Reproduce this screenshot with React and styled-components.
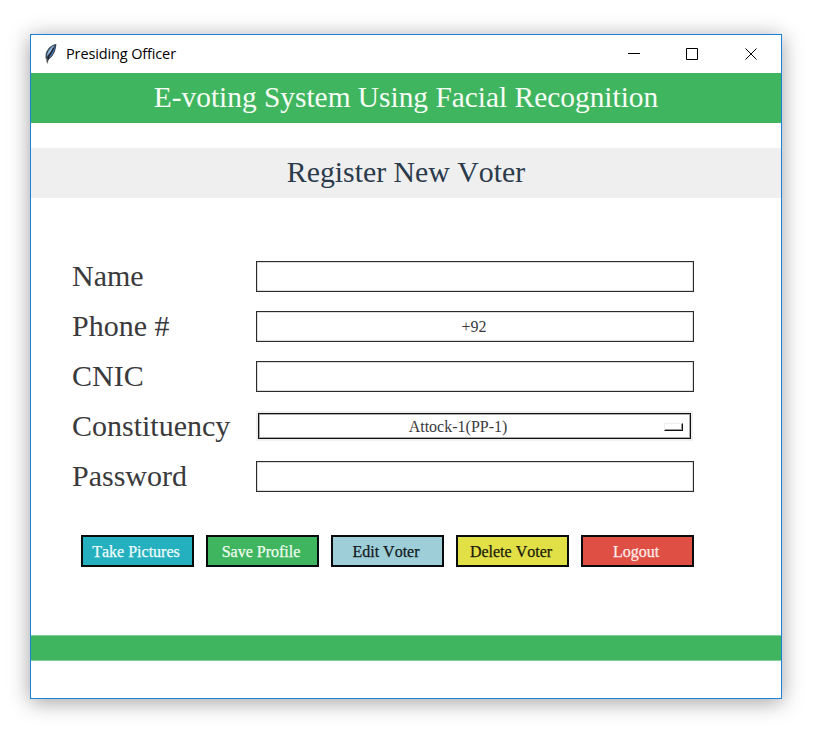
import React from "react";
import styled, { createGlobalStyle } from "styled-components";

const GlobalStyle = createGlobalStyle`
  * { box-sizing: border-box; }
  body { margin: 0; background: #fff; }
`;

const Desktop = styled.div`
  width: 828px;
  height: 750px;
  padding: 34px 46px 51px 30px;
  overflow: hidden;
  background: #fff;
`;

const Window = styled.main`
  display: flex;
  flex-direction: column;
  width: 752px;
  height: 665px;
  border: 1px solid #1a83d7;
  background: #fff;
  box-shadow: 0 3px 20px rgba(0, 0, 0, 0.38);
  font-family: "Liberation Serif", "Times New Roman", serif;
  font-kerning: none;
`;

const TitleBar = styled.header`
  display: flex;
  align-items: center;
  height: 38px;
  flex: none;
  padding: 0 1px 0 12px;
`;

const WindowTitle = styled.span`
  flex: 1;
  margin-left: 7px;
  padding-bottom: 1px;
  font: 14.5px/20px "Open Sans", "Segoe UI", sans-serif;
  letter-spacing: -0.13px;
  color: #000;
`;

const WindowControl = styled.button`
  display: flex;
  align-items: center;
  justify-content: center;
  width: 58.5px;
  height: 38px;
  padding: 0;
  border: 0;
  background: none;
`;

const Banner = styled.h1`
  flex: none;
  height: 50px;
  margin: 0;
  background: #40b55f;
  color: #f6fdf5;
  font-size: 29.4px;
  font-weight: 400;
  line-height: 49px;
  text-align: center;
`;

const Subtitle = styled.h2`
  flex: none;
  height: 50px;
  margin: 25px 0 0;
  background: #efefef;
  color: #2b3b4b;
  font-size: 29.8px;
  font-weight: 400;
  line-height: 47px;
  text-align: center;
`;

const Form = styled.form`
  display: flex;
  flex-direction: column;
  gap: 19px;
  flex: none;
  margin: 63px 88px 0 41px;
`;

const Field = styled.label`
  display: grid;
  grid-template-columns: 184px 438px;
  align-items: center;
  height: 31px;
`;

const FieldName = styled.span`
  padding-bottom: 2px;
  color: #3a3a3c;
  font-size: 30px;
  line-height: 29px;
`;

const TextInput = styled.input`
  width: 438px;
  height: 31px;
  padding: 1px 2px 0 0;
  border: 1px solid #2b2b2b;
  border-radius: 0;
  outline: 0;
  background: #fff;
  box-shadow: inset 0 0 0 0.5px #bbb;
  color: #3a3a3c;
  font: 16px "Liberation Serif", serif;
  text-align: center;
`;

const Picker = styled.button`
  display: grid;
  grid-template-columns: 1fr 19px;
  align-items: center;
  align-self: start;
  width: 433px;
  height: 26px;
  margin: 2px 0 0 2px;
  padding: 0 7px 0 0;
  border: 1px solid #111;
  border-radius: 0;
  background: #fff;
  box-shadow: 0 0 0 2px #f0f0f0, inset 0 0 0 1px #aaa;
  color: #3a3a3c;
  font: 16px/24px "Liberation Serif", serif;
  font-kerning: none;
`;

const PickerValue = styled.span`
  padding: 1px 7px 0 0;
  text-align: center;
`;

const Indicator = styled.span`
  width: 19px;
  height: 8px;
  border: 1px solid #eee;
  border-right: 1px solid #111;
  border-bottom: 1px solid #111;
  box-shadow: inset -1px -1px #999;
`;

const Actions = styled.div`
  display: flex;
  flex: none;
  gap: 12px;
  margin: 43px 0 0 50px;
`;

const ActionButton = styled.button`
  width: 113px;
  height: 32px;
  padding: 2px 3px 0 0;
  border: 2px solid #080b0b;
  border-radius: 0;
  background: ${({ $fill }) => $fill};
  color: ${({ $ink }) => $ink};
  font: 16px/26px "Liberation Serif", serif;
  font-kerning: none;
  -webkit-text-stroke: 0.25px currentColor;
  white-space: nowrap;
`;

const FooterBar = styled.footer`
  flex: none;
  height: 26px;
  margin-top: 68px;
  background: #40b55f;
  border-top: 1px solid #83cf97;
  border-bottom: 1px solid #83cf97;
`;

const Feather = () => (
  <svg width="16" height="22" viewBox="0 0 16 22" aria-hidden="true">
    <path d="M13.3 1C8.7 1.4 4.1 5.7 2.7 10.7l-.2 4.8 2.7 1.2c4.8-2.5 8-9.2 8.1-15.7Z" fill="#364555" />
    <path d="M11.4 2.2C7.8 4 4.4 8.2 3.7 13.3l4.4-4.5 3.3-6.6Z" fill="#91b7df" />
    <path d="m12 3-3 7-4.5 5.2 2.2-.8C9.8 11.9 11.4 8 12 3Z" fill="#477fc4" />
    <path d="M10.6 5 6 13.2 4.2 19" fill="none" stroke="#202429" strokeWidth="1.3" />
    <path d="m3.5 15.5.9 5" stroke="#777" />
  </svg>
);

const controls = [
  { label: "Minimize", d: "M0 5.5h12" },
  { label: "Maximize", d: "M.5.5h11v11H.5Z" },
  { label: "Close", d: "m.5.5 11 11M11.5.5l-11 11" },
];

const fields = [
  { name: "Name", value: "" },
  { name: "Phone #", value: "+92" },
  { name: "CNIC", value: "" },
  { name: "Constituency", value: "Attock-1(PP-1)", picker: true },
  { name: "Password", value: "", type: "password" },
];

const actions = [
  { name: "Take Pictures", fill: "#24b0bf", ink: "#effcfc" },
  { name: "Save Profile", fill: "#40b55f", ink: "#effcf0" },
  { name: "Edit Voter", fill: "#9ecfd9", ink: "#11191b" },
  { name: "Delete Voter", fill: "#e2e047", ink: "#1b1b0b" },
  { name: "Logout", fill: "#df4f44", ink: "#ffeceb" },
];

export default function App() {
  return (
    <Desktop>
      <GlobalStyle />
      <Window>
        <TitleBar>
          <Feather />
          <WindowTitle>Presiding Officer</WindowTitle>
          {controls.map(({ label, d }) => (
            <WindowControl key={label} aria-label={label}>
              <svg width="12" height="12" viewBox="0 0 12 12">
                <path d={d} fill="none" stroke="#000" />
              </svg>
            </WindowControl>
          ))}
        </TitleBar>
        <Banner>E-voting System Using Facial Recognition</Banner>
        <Subtitle>Register New Voter</Subtitle>
        <Form>
          {fields.map(({ name, value, picker, type = "text" }) => (
            <Field key={name}>
              <FieldName>{name}</FieldName>
              {picker ? (
                <Picker type="button">
                  <PickerValue>{value}</PickerValue>
                  <Indicator />
                </Picker>
              ) : (
                <TextInput type={type} defaultValue={value} />
              )}
            </Field>
          ))}
        </Form>
        <Actions>
          {actions.map(({ name, fill, ink }) => (
            <ActionButton key={name} $fill={fill} $ink={ink}>
              {name}
            </ActionButton>
          ))}
        </Actions>
        <FooterBar />
      </Window>
    </Desktop>
  );
}
